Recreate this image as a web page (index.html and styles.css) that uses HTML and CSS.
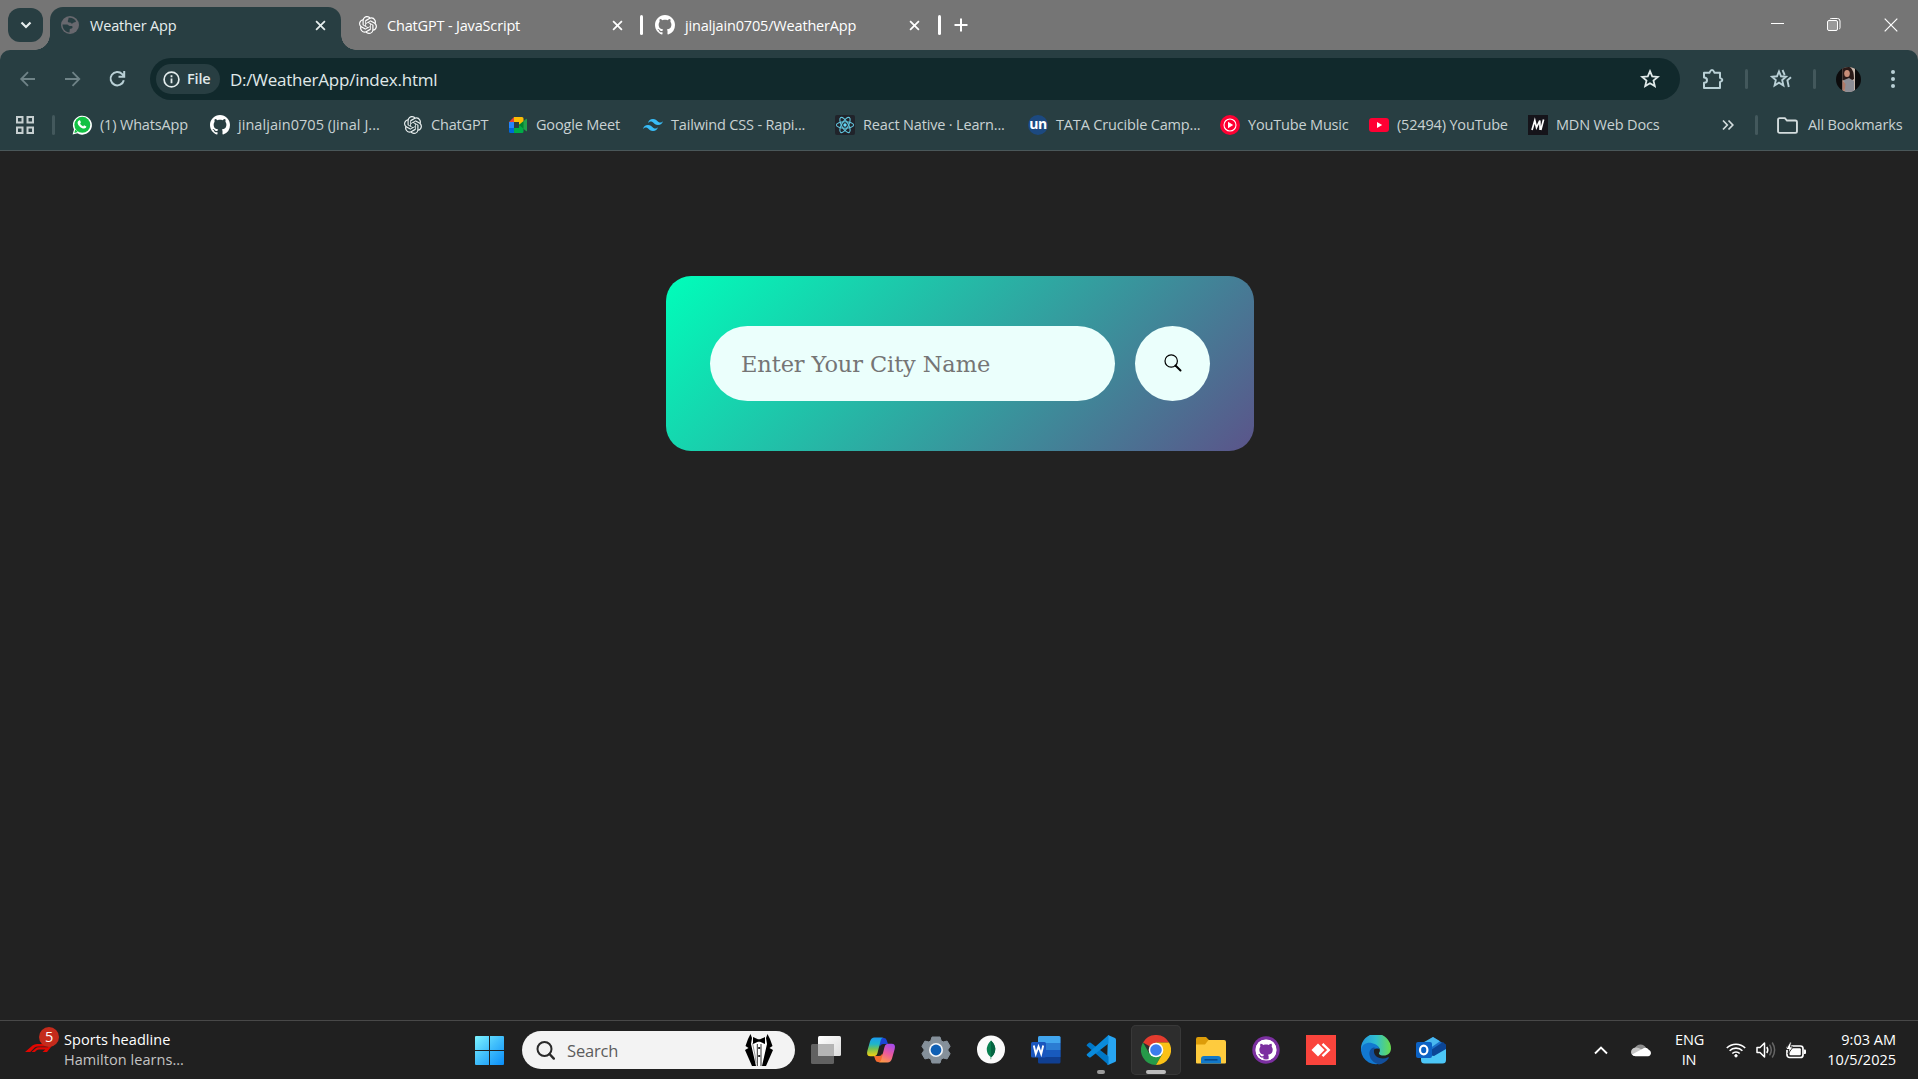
FILE: index.html
```html
<!DOCTYPE html>
<html lang="en">
<head>
<meta charset="utf-8">
<title>Weather App</title>
<link rel="stylesheet" href="styles.css">
</head>
<body>
<svg width="0" height="0" class="defs">
  <defs>
    <symbol id="gh" viewBox="0 0 16 16"><path d="M8 0C3.58 0 0 3.58 0 8c0 3.54 2.29 6.53 5.47 7.59.4.07.55-.17.55-.38 0-.19-.01-.82-.01-1.49-2.01.37-2.53-.49-2.69-.94-.09-.23-.48-.94-.82-1.13-.28-.15-.68-.52-.01-.53.63-.01 1.08.58 1.23.82.72 1.21 1.87.87 2.33.66.07-.52.28-.87.51-1.07-1.78-.2-3.64-.89-3.64-3.95 0-.87.31-1.59.82-2.15-.08-.2-.36-1.02.08-2.12 0 0 .67-.21 2.2.82.64-.18 1.32-.27 2-.27s1.36.09 2 .27c1.53-1.04 2.2-.82 2.2-.82.44 1.1.16 1.92.08 2.12.51.56.82 1.27.82 2.15 0 3.07-1.87 3.75-3.65 3.95.29.25.54.73.54 1.48 0 1.07-.01 1.93-.01 2.2 0 .21.15.46.55.38A8.01 8.01 0 0 0 16 8c0-4.42-3.58-8-8-8z"/></symbol>
    <symbol id="gpt" viewBox="0 0 24 24"><path d="M22.28 9.82a5.98 5.98 0 0 0-.52-4.91 6.05 6.05 0 0 0-6.51-2.9A6.07 6.07 0 0 0 4.98 4.18a5.98 5.98 0 0 0-4 2.9 6.05 6.05 0 0 0 .74 7.1 5.98 5.98 0 0 0 .51 4.91 6.05 6.05 0 0 0 6.52 2.9A5.98 5.98 0 0 0 13.26 24a6.06 6.06 0 0 0 5.77-4.21 5.99 5.99 0 0 0 4-2.9 6.06 6.06 0 0 0-.75-7.07zm-9.02 12.61a4.48 4.48 0 0 1-2.88-1.04l.14-.08 4.78-2.76a.79.79 0 0 0 .39-.68v-6.74l2.02 1.17a.07.07 0 0 1 .04.05v5.58a4.5 4.5 0 0 1-4.49 4.5zM3.6 18.3a4.47 4.47 0 0 1-.54-3.01l.14.08 4.78 2.76a.77.77 0 0 0 .78 0l5.85-3.37v2.33a.08.08 0 0 1-.04.06L9.74 19.95A4.5 4.5 0 0 1 3.6 18.3zM2.34 7.9a4.49 4.49 0 0 1 2.37-1.98V11.6a.77.77 0 0 0 .38.68l5.82 3.35-2.02 1.17a.08.08 0 0 1-.07 0l-4.83-2.79A4.5 4.5 0 0 1 2.34 7.87zm16.6 3.86L13.1 8.36 15.12 7.2a.08.08 0 0 1 .07 0l4.83 2.79a4.49 4.49 0 0 1-.68 8.1v-5.68a.79.79 0 0 0-.4-.65zm2-3.03l-.14-.08-4.77-2.78a.78.78 0 0 0-.79 0L9.41 9.23V6.9a.07.07 0 0 1 .03-.06l4.83-2.79a4.5 4.5 0 0 1 6.68 4.66zM8.3 12.86l-2.02-1.16a.08.08 0 0 1-.04-.06V6.07a4.5 4.5 0 0 1 7.38-3.45l-.14.08-4.78 2.76a.79.79 0 0 0-.39.68zm1.1-2.36L12 9l2.6 1.5v3L12 15l-2.6-1.5z"/></symbol>
    <symbol id="x" viewBox="0 0 12 12"><path d="M1.2 1.2l9.6 9.6M10.8 1.2l-9.6 9.6" fill="none" stroke="currentColor" stroke-width="1.9"/></symbol>
    <symbol id="star" viewBox="0 0 20 20"><path d="M10 2.2l2.200 5.200 5.600.5-4.300 3.700 1.300 5.500L10 14.200l-4.800 2.900 1.300-5.500-4.300-3.700 5.600-.5z" fill="none" stroke="currentColor" stroke-width="1.800"/></symbol>
  </defs>
</svg>

<header class="browser">
  <div class="tabstrip">
    <button class="tabsearch"><svg width="12" height="8" viewBox="0 0 12 8"><path d="M1.5 1.5L6 6l4.5-4.5" fill="none" stroke="#e6eeee" stroke-width="2.2"/></svg></button>
    <div class="tab active">
      <svg class="fav" viewBox="0 0 20 20"><circle cx="10" cy="10" r="9" fill="#68686e"/><path d="M2.500 9.500H7c1.500 0 1.500 1.500 2.800 1.500h2c1.200.3 1 2-.2 2.400-1 .3-1.800 0-1.900 1.300l-.2 2.700c-4-.2-7-3.500-7-7.900zM8.500 2.800c3.500-.6 6 1 7.500 3.400-.3 1.500-2 .8-3 1.800-.8 1-2.300.6-2.400-.5-1.500.1-3-.2-2.800-1.500.1-1.200 1-1.600.7-3.200z" fill="#283e42"/></svg>
      <span class="title">Weather App</span>
      <svg class="close" viewBox="0 0 12 12"><use href="#x"/></svg>
    </div>
    <div class="tab second">
      <svg class="fav" fill="#fff"><use href="#gpt"/></svg>
      <span class="title">ChatGPT - JavaScript</span>
      <svg class="close"><use href="#x"/></svg>
    </div>
    <i class="tabsep"></i>
    <div class="tab third">
      <svg class="fav" fill="#fff"><use href="#gh"/></svg>
      <span class="title">jinaljain0705/WeatherApp</span>
      <svg class="close"><use href="#x"/></svg>
    </div>
    <i class="tabsep"></i>
    <svg class="plus" viewBox="0 0 14 14"><path d="M7 .5v13M.5 7h13" stroke="#fff" stroke-width="2"/></svg>
    <div class="winctl">
      <svg width="14" height="14" viewBox="0 0 14 14"><path d="M1 5.500h13" stroke="#fff"/></svg>
      <svg width="14" height="14" viewBox="0 0 14 14" fill="none" stroke="#fff"><rect x=".5" y="2.500" width="10" height="10" rx="1.500" fill="#999"/><path d="M3 1.200Q3.200.5 4.200.5H10.500Q13 .5 13 3v6.800q0 1-.8 1.200"/></svg>
      <svg width="14" height="14" viewBox="0 0 14 14"><path d="M.7.700l12.600 12.600M13.300.700L.7 13.300" stroke="#fff" stroke-width="1.200"/></svg>
    </div>
  </div>

  <div class="toolbar">
    <div class="nav">
      <svg viewBox="0 0 20 20" class="dim"><path d="M17 10H3.500M10 3.200L3.200 10l6.800 6.800" fill="none" stroke="currentColor" stroke-width="1.800"/></svg>
      <svg viewBox="0 0 20 20" class="dim"><path d="M2 10h14M9.500 3.200l6.800 6.800-6.800 6.800" fill="none" stroke="currentColor" stroke-width="1.800"/></svg>
      <svg viewBox="0 0 20 20"><path d="M15.800 11.200A6.700 6.700 0 1 1 14.200 5.100L16 7.200M16.200 2v5.700h-5.700" fill="none" stroke="currentColor" stroke-width="2"/></svg>
    </div>
    <div class="omnibox">
      <span class="chip"><svg width="17" height="17" viewBox="0 0 17 17"><circle cx="8.500" cy="8.500" r="7.400" fill="none" stroke="#e3ecec" stroke-width="1.700"/><path d="M8.500 7.600v4.600M8.500 4.300v1.900" stroke="#e3ecec" stroke-width="1.800"/></svg><b>File</b></span>
      <span class="url">D:/WeatherApp/index.html</span>
      <svg class="star"><use href="#star"/></svg>
    </div>
    <div class="actions">
      <svg width="22" height="22" viewBox="0 0 22 22"><path d="M2 4.800h5.500c.5-.3.500-2.800 2.500-2.800s2 2.500 2.500 2.800H18V10c.4.500 2.300.5 2.300 2s-1.900 1.500-2.300 2v6H2v-5.200c2 0 3-1 3-2.600S4 9.600 2 9.600z" fill="none" stroke="currentColor" stroke-width="2" stroke-linejoin="round"/></svg>
      <i class="sep"></i>
      <svg width="22" height="22" viewBox="0 0 22 22"><path d="M9 3.500l2 4.800 5 .4-3.800 3.400 1.200 5.400L9 14.700l-4.400 2.800 1.200-5.400L2 8.700l5-.4zM12.500 2l2.200 5M21 9.200l-3.600 3.200 1.400 6.600" fill="none" stroke="currentColor" stroke-width="1.900"/></svg>
      <i class="sep"></i>
      <svg width="25" height="25" viewBox="0 0 25 25"><defs><clipPath id="av"><circle cx="12.500" cy="12.500" r="12.500"/></clipPath></defs><g clip-path="url(#av)"><path fill="#0c0b0c" d="M0 0h25v25H0z"/><path fill="#c9b8ad" d="M6.500 0H19v25H6.500z"/><path fill="#2b1a18" d="M6.500 0H14q4 3 4 12l-5 3-6.500-2z"/><ellipse cx="11" cy="6.500" rx="2.800" ry="3.600" fill="#c98d78"/><path d="M8 13l5-2 5 3v11H9z" fill="#8d8d95"/><path d="M6.500 13l3 4-1 8h-2z" fill="#b07a68"/></g></svg>
      <svg width="4" height="18" viewBox="0 0 4 18" fill="currentColor"><circle cx="2" cy="2" r="2"/><circle cx="2" cy="9" r="2"/><circle cx="2" cy="16" r="2"/></svg>
    </div>
  </div>

  <nav class="bookmarks">
    <svg class="apps" viewBox="0 0 20 20" fill="none" stroke="#c6cfd0" stroke-width="2"><path d="M2 2h5.500v5.500H2zM12.500 2H18v5.500h-5.500zM2 12.500h5.500V18H2zM12.500 12.500H18V18h-5.500z"/></svg>
    <i class="sep"></i>
    <div class="list">
      <a><svg viewBox="0 0 20 20"><path d="M.6 19.600l1.400-5A9.500 9.500 0 1 1 5.500 18.300z" fill="#fff"/><circle cx="10.300" cy="9.800" r="8" fill="#12c143"/><path d="M2.300 17.900l1-3.500 2.500 2.600z" fill="#12c143"/><path d="M7.300 5.300c.8-.2 1 .3 1.500 1.700.2.600-.2 1-.7 1.600.7 1.300 1.700 2.200 3.100 2.800.6-.7.800-1.200 1.300-1 1.300.6 1.900.9 1.900 1.200 0 1.300-1.400 2.100-2.500 2-2.700-.3-5.900-3.200-6.300-5.700 0-1.100.7-2.300 1.700-2.600z" fill="#fff"/></svg><span>(1) WhatsApp</span></a>
      <a><svg fill="#fff"><use href="#gh"/></svg><span class="wide">jinaljain0705 (Jinal J...</span></a>
      <a><svg fill="#e9efef" class="s18"><use href="#gpt"/></svg><span>ChatGPT</span></a>
      <a><svg viewBox="0 0 20 20"><path d="M1 7l5-5v5z" fill="#ea4335"/><path d="M6 2h8q1.500 0 1.500 1.500V8L11 10V7H6z" fill="#fbbc04"/><path d="M1 7h5v6H1z" fill="#2684fc"/><path d="M1 13h5v5H2.500Q1 18 1 16.500z" fill="#0066da"/><path d="M6 13h5v-3l4.500 2v4.500q0 1.500-1.500 1.500H6z" fill="#00ac47"/><path d="M11 10l7-6q1-.6 1 .5v11q0 1-1 .4z" fill="#21a04a"/><path d="M11 10l4.500-3.800v7.600z" fill="#00832d"/></svg><span>Google Meet</span></a>
      <a><svg viewBox="0 0 24 24"><path d="M12 4.800c-3.200 0-5.200 1.600-6 4.800 1.200-1.600 2.600-2.200 4.200-1.800.91.230 1.570.890 2.290 1.620C13.670 10.610 15.030 12 18 12c3.200 0 5.200-1.600 6-4.800-1.200 1.600-2.600 2.200-4.200 1.800-.91-.230-1.570-.890-2.290-1.620C16.330 6.190 14.970 4.800 12 4.800zM6 12c-3.200 0-5.200 1.600-6 4.800 1.200-1.600 2.600-2.200 4.200-1.800.91.230 1.570.890 2.290 1.620C7.670 17.810 9.030 19.200 12 19.200c3.200 0 5.200-1.600 6-4.800-1.200 1.600-2.600 2.200-4.200 1.800-.91-.230-1.570-.890-2.290-1.620C10.330 13.390 8.970 12 6 12z" fill="#38bdf8"/></svg><span>Tailwind CSS - Rapi...</span></a>
      <a><svg viewBox="0 0 20 20"><rect width="20" height="20" rx="2" fill="#20232a"/><g fill="none" stroke="#61c5dd" stroke-width="1.100"><ellipse cx="10" cy="10" rx="8.600" ry="3.300"/><ellipse cx="10" cy="10" rx="8.600" ry="3.300" transform="rotate(60 10 10)"/><ellipse cx="10" cy="10" rx="8.600" ry="3.300" transform="rotate(120 10 10)"/></g><circle cx="10" cy="10" r="1.700" fill="#61dafb"/></svg><span>React Native · Learn...</span></a>
      <a><i class="un">un</i><span>TATA Crucible Camp...</span></a>
      <a><svg viewBox="0 0 20 20"><circle cx="10" cy="10" r="10" fill="#f03"/><circle cx="10" cy="10" r="6" fill="none" stroke="#fff" stroke-width="1.100"/><path d="M8 6.800l5.200 3.200L8 13.200z" fill="#fff"/></svg><span>YouTube Music</span></a>
      <a><svg viewBox="0 0 20 20"><rect y="3" width="20" height="14" rx="3" fill="#f03"/><path d="M8 7l5.200 3L8 13z" fill="#fff"/></svg><span>(52494) YouTube</span></a>
      <a><svg viewBox="0 0 20 20"><path fill="#15141a" d="M0 0h20v20H0z"/><path d="M4 15L6.800 5.500l1.700 7L11.800 5.500l.3 9.500M12.800 15L15.600 4.500" fill="none" stroke="#fff" stroke-width="1.700"/></svg><span>MDN Web Docs</span></a>
    </div>
    <svg class="more" viewBox="0 0 12 12"><path d="M1 1.500L5.300 6 1 10.500M6.500 1.500L10.800 6l-4.300 4.500" fill="none" stroke="#d3dcdd" stroke-width="1.700"/></svg>
    <i class="sep"></i>
    <a class="all"><svg viewBox="0 0 20 16"><path d="M1 2.500Q1 1 2.500 1H7.500l2 2.300H17.500Q19 3.300 19 4.800v8.700Q19 15 17.500 15h-15Q1 15 1 13.500z" fill="none" stroke="#d3dcdd" stroke-width="1.800"/></svg><span>All Bookmarks</span></a>
  </nav>
</header>

<main class="page">
  <div class="card">
    <input type="text" placeholder="Enter Your City Name">
    <button aria-label="Search"><svg width="18" height="18" viewBox="0 0 18 18"><circle cx="7.200" cy="7" r="6.200" fill="none" stroke="#000" stroke-width="1.200"/><path d="M11.500 11.500l5 5" stroke="#000" stroke-width="2" stroke-linecap="round"/></svg></button>
  </div>
</main>

<footer class="taskbar">
  <div class="widget">
    <div class="f1"><svg width="28" height="10" viewBox="0 0 28 10"><path d="M0 9L7.500 2.500Q9.500 1 12 1H28l-2.600 2.400H13q-2 0-3.300 1.200L5.200 9zM6.500 9l4-3.500Q11.800 4.300 13.500 4.300H24L21.600 6.400H14q-1.200 0-2 .7L9.800 9zM17.500 9L26 1.500h2L22 9z" fill="#e10600"/></svg><b class="badge">5</b></div>
    <div class="news"><p>Sports headline</p><p class="sub">Hamilton learns...</p></div>
  </div>
  <svg class="start" viewBox="0 0 29 29"><defs><linearGradient id="w" x1="0" y1="0" x2="1" y2="1" ><stop offset="0" stop-color="#7df3ff"/><stop offset=".5" stop-color="#3fbdfb"/><stop offset="1" stop-color="#0a8df8"/></linearGradient></defs><path d="M1 0h13v14H0V1Q0 0 1 0zM15 0h13q1 0 1 1v13H15zM0 15h14v14H1q-1 0-1-1zM15 15h14v13q0 1-1 1H15z" fill="url(#w)"/></svg>
  <div class="search">
    <svg width="19" height="19" viewBox="0 0 19 19"><circle cx="8.500" cy="8" r="7" fill="none" stroke="#2a2a2a" stroke-width="2"/><path d="M13.500 13l4.300 4.600" stroke="#2a2a2a" stroke-width="2.400" stroke-linecap="round"/></svg>
    <span>Search</span>
    <svg class="tux" width="28" height="33" viewBox="0 0 28 33"><path d="M7 3L14 9l7-6 2 10-4 19h-9L6 12z" fill="#fff"/><path d="M5.500 0L7 4 6 10l5 22H7L3.500 24 0 16l3.500-2L.5 12 3 5zM22.500 0L21 4l1 6-5 22h4l3.500-8L28 16l-3.500-2 3-2L25 5z" fill="#000"/><path d="M8 3l5 2.300h2L20 3v7l-5-2.200h-2L8 10z" fill="#000"/><path d="M12.300 10v22M16 10v22" stroke="#333" stroke-width="1"/><path d="M14.200 13v2M14.200 21v2" stroke="#222" stroke-width="2"/><path d="M7.500 9l2.500 12 1 8" stroke="#999" stroke-width="1" fill="none"/></svg>
  </div>
  <div class="apps-row">
    <div class="slot"><svg viewBox="0 0 30 30"><defs><linearGradient id="tv" x1="0" y1="0" x2="1" y2="1"><stop offset="0" stop-color="#fff"/><stop offset="1" stop-color="#dcdcdc"/></linearGradient></defs><rect x="7" y="1" width="23" height="20" rx="1.500" fill="url(#tv)"/><rect x="0" y="9" width="23" height="20" rx="1.500" fill="#777" opacity=".75"/><path d="M7 9h16v12H7z" fill="#b4b4b4"/></svg></div>
    <div class="slot"><svg viewBox="0 0 30 30"><defs><linearGradient id="c1" x1="0" y1="0" x2="0" y2="1"><stop offset="0" stop-color="#1b9cf0"/><stop offset=".35" stop-color="#1fb5c9"/><stop offset=".6" stop-color="#72c055"/><stop offset="1" stop-color="#f8d010"/></linearGradient><linearGradient id="c2" x1=".7" y1="0" x2=".3" y2="1"><stop offset="0" stop-color="#a64bea"/><stop offset=".5" stop-color="#ec5a9c"/><stop offset="1" stop-color="#ff9a45"/></linearGradient></defs><path d="M11 3h7q2 0 2.700 2.200L22 9h-5q-2.500 0-3.200 2.500L10 3z" fill="#1a45d4"/><path d="M19 27h-7q-2 0-2.700-2.200L8 21h5q2.500 0 3.200-2.500L20 27z" fill="#f36a30"/><path d="M8.500 2.500H18q-2.500 0-3.400 3.200L11.500 18q-.9 3.300-4 3.300H4.500Q0 21.300 1.300 16L4 6.500Q5.200 2.500 8.500 2.500z" fill="url(#c1)"/><path d="M21.500 27.500H12q2.500 0 3.400-3.200L18.500 12q.9-3.300 4-3.300h3q4.500 0 3.200 5.300L26 23.500q-1.200 4-4.500 4z" fill="url(#c2)"/></svg></div>
    <div class="slot"><svg viewBox="0 0 30 30"><path d="M11 2h8l1.200 3.800 2 1.100 3.900-.8 3 5.200L26.700 15l2.400 3.700-3 5.200-3.900-.8-2 1.100L19 28h-8l-1.200-3.800-2-1.100-3.900.8-3-5.200L3.300 15 .9 11.300l3-5.200 3.900.8 2-1.100z" fill="#85909a" stroke="#85909a" stroke-width="1" stroke-linejoin="round"/><circle cx="15" cy="15" r="7" fill="#f4f6f8"/><circle cx="15" cy="15" r="5.400" fill="#0f5fb4"/></svg></div>
    <div class="slot"><svg viewBox="0 0 30 30"><circle cx="15" cy="14.500" r="14" fill="#fafafa"/><path d="M15 5.500q4.700 4.500 4.200 9.500-.4 4.500-4 7.200v2h-.6V22q-3.500-2.700-3.800-7-.3-5 4.200-9.500z" fill="#087f4f"/><path d="M15 5.500q4.700 4.500 4.200 9.500-.4 4.500-4 7.200z" fill="#046341"/></svg></div>
    <div class="slot"><svg viewBox="0 0 30 30"><rect x="7" y="1" width="22.500" height="27.500" rx="1.500" fill="#103f91"/><path d="M8.500 1H28q1.500 0 1.500 1.500V8H7V2.500Q7 1 8.500 1z" fill="#41a5ee"/><path d="M7 8h22.500v7H7z" fill="#2b7cd3"/><path d="M7 15h22.500v7H7z" fill="#185abd"/><rect y="7" width="15" height="15.500" rx="1.500" fill="#1a56be"/><path d="M2.800 10.500l2 8.500L7.500 11.500 10.200 19l2-8.500" fill="none" stroke="#fff" stroke-width="1.900"/></svg></div>
    <div class="slot on"><svg viewBox="0 0 30 30"><path d="M22 0l7 3q1 .5 1 1.500v21q0 1-1 1.500l-7 3-1-1z" fill="#27a5f2"/><path d="M1 9.500l2-1.800q.8-.6 1.700 0L22.500 21.500V30L.8 10.800Q.4 10.200 1 9.500z" fill="#0078c8"/><path d="M1 20.500l2 1.800q.8.600 1.700 0L22.500 8.500V0L.8 19.200q-.4.600.2 1.300z" fill="#0a8bdc"/></svg></div>
    <div class="slot cur"><svg viewBox="0 0 30 30"><path d="M15 15L2 7.500A15 15 0 0 1 28 7.500L15 7.500z" fill="#e33b2e"/><path d="M2 7.500A15 15 0 0 0 15 30l6.500-11.200L15 15 8.500 18.800z" fill="#269a49"/><path d="M28 7.500A15 15 0 0 1 15 30L21.500 18.800 15 15V7.500z" fill="#fbc116"/><circle cx="15" cy="15" r="7.300" fill="#fff"/><circle cx="15" cy="15" r="5.800" fill="#3b7ded"/></svg></div>
    <div class="slot"><svg viewBox="0 0 30 30"><path d="M0 4q0-2 2-2h8l3.500 3.500H22V12H0z" fill="#dc9c09"/><path d="M0 9.500h9L12.500 5H28q2 0 2 2v20.500q0 1-1 1H1q-1 0-1-1z" fill="#fecb3e"/><path d="M5 28.500V24q0-3 3-3h14q3 0 3 3v4.500z" fill="#1279c9"/><path d="M8.500 24.800h13" stroke="#07488a" stroke-width="1.500"/></svg></div>
    <div class="slot"><svg viewBox="0 0 30 30"><circle cx="15" cy="15" r="13.700" fill="#7b2fa0"/><circle cx="15" cy="15" r="10.500" fill="#fff"/><circle cx="15" cy="15" r="9.600" fill="#7b2fa0"/><use href="#gh" x="4.500" y="4.500" width="21" height="21" fill="#fff"/></svg></div>
    <div class="slot"><svg viewBox="0 0 30 30"><path fill="#fa443c" d="M0 0h30v30H0z"/><path d="M5.500 15L12 8.500l6.500 6.500-6.500 6.500z" fill="#fff"/><path d="M16.500 8.800l6.300 6.200-6.300 6.200" fill="none" stroke="#fff" stroke-width="2.400"/></svg></div>
    <div class="slot"><svg viewBox="0 0 30 30"><defs><linearGradient id="e1"><stop offset="0" stop-color="#2297e0"/><stop offset=".5" stop-color="#31bfcf"/><stop offset="1" stop-color="#68dc4d"/></linearGradient></defs><path d="M0 14A15 15 0 0 1 30 13.500c0 4.500-3.500 7-7 7-3.500 0-5.500-1.200-5-2.500 2-2.500.8-7-4-7.500-5 0-10 2.500-14 6z" fill="url(#e1)"/><path d="M0 15.500C.8 9 6 7.200 10.500 8c4.500.8 7.500 3.500 8 6-4.500-1.500-7.500 1-7.500 4 0 5 5 9 11 9.500A15 15 0 0 1 0 15.500z" fill="#1278d0"/><path d="M12.500 12.500c-3 1-4.500 4-4 7.500.8 5 4.500 8 9.500 9.500 4-.8 7.500-3 9.800-6.500.4-.7-.2-1-.8-.7-5 2.500-13 1.200-14-5-.2-2 .2-3.500 1.500-4.500z" fill="#124f9c"/></svg></div>
    <div class="slot"><svg viewBox="0 0 30 30"><path d="M5 10L17 2l13 8v8L15 24 5 18z" fill="#1b6fc8"/><path d="M9 6.500L17 2l7 4.200L10 16H5v-6z" fill="#48b8f0"/><path d="M12 17L27 7l3 3v5L15 24z" fill="#0b4596"/><path d="M5 19l13 2 12-7v11q0 3.500-3.500 3.500H8.500Q5 28.500 5 25z" fill="#4cc6f6"/><rect y="7" width="16" height="16" rx="2" fill="#0c62c4"/><ellipse cx="7.700" cy="15" rx="3.700" ry="4.300" fill="none" stroke="#fff" stroke-width="2.200"/></svg></div>
  </div>
  <div class="tray">
    <svg class="chev" width="14" height="9" viewBox="0 0 14 9"><path d="M1 7.500l6-6 6 6" fill="none" stroke="#fff" stroke-width="1.900"/></svg>
    <svg class="cloud" width="20" height="14" viewBox="0 0 20 14"><path d="M4 5a6 6 0 0 1 11 0l-4 5-9-1z" fill="#8c8c8c"/><path d="M4.500 4.500q3-.5 7 2.500L7 13H4Q0 12.500 0 9q.3-4 4.500-4.500z" fill="#c6c6c6"/><path d="M13 5q3-1 4.500 1.500Q20 7.500 20 10q-.3 3-3 3.200H4.500Q2 13 1 11.500z" fill="#fff"/></svg>
    <div class="lang"><p>ENG</p><p>IN</p></div>
    <svg class="wifi" width="20" height="16" viewBox="0 0 20 16" fill="none" stroke="#fff" stroke-width="1.600"><path d="M.8 6a13 13 0 0 1 18.400 0M3.600 8.800a9 9 0 0 1 12.800 0M6.300 11.500a5.200 5.200 0 0 1 7.400 0"/><circle cx="10" cy="13.800" r="1.200" fill="#fff" stroke-width="1"/></svg>
    <svg class="vol" width="20" height="18" viewBox="0 0 20 18" fill="none" stroke="#fff" stroke-width="1.500"><path d="M1 6.500h3L8.500 2v14L4 11.500H1z" stroke-linejoin="round"/><path d="M10.800 6q2 3 0 6"/><path d="M13.500 3.700q3.600 5.300 0 10.600M16.200 1.500q4.800 7.500 0 15" stroke="#666"/></svg>
    <svg class="bat" width="20" height="17" viewBox="0 0 20 17"><rect x="1" y="4" width="16" height="11.500" rx="2.500" fill="none" stroke="#fff" stroke-width="1.700"/><rect x="3.500" y="6.300" width="11.300" height="7" rx="1" fill="#fff"/><path d="M18 7.500h1q1 0 1 1v2.500q0 1-1 1h-1z" fill="#fff"/><path d="M4 0L0 7.500h3L2 12l5-7H4.500L5.500 0z" fill="#fff" stroke="#202020" stroke-width=".9"/></svg>
    <div class="clock"><p>9:03 AM</p><p>10/5/2025</p></div>
  </div>
</footer>
</body>
</html>
```
FILE: styles.css
```css
* { box-sizing: border-box; }
body {
  margin: 0;
  height: 1079px;
  display: flex;
  flex-direction: column;
  overflow: hidden;
  background: #222;
  font-family: "Open Sans", "Noto Sans", sans-serif;
  font-size: 14.5px;
  letter-spacing: -0.17px;
}
.defs { position: absolute; }
p { margin: 0; }
button, input { border: 0; padding: 0; font-family: inherit; }
svg { flex: none; }
span { white-space: nowrap; }

/* Tab strip */
.browser { flex: none; height: 151px; background: #757575; }
.tabstrip {
  height: 50px;
  display: flex;
  align-items: center;
  color: #fff;
  padding-left: 8px;
}
.tabsearch {
  width: 35px;
  height: 34px;
  border-radius: 12px;
  background: #283e42;
  display: flex;
  align-items: center;
  justify-content: center;
  margin-right: 7px;
}
.tab { display: flex; align-items: center; height: 36px; }
.tab .title { flex: 1; margin-left: 10px; }
.tab.active {
  position: relative;
  width: 291px;
  height: 43px;
  align-self: flex-end;
  padding: 0 15px 7px 10px;
  border-radius: 13px 13px 0 0;
  background: #283e42;
  color: #e6eeee;
}
.tab.active::before, .tab.active::after {
  content: "";
  position: absolute;
  bottom: 0;
  width: 15px;
  height: 15px;
}
.tab.active::before { left: -15px; background: radial-gradient(circle at 0 0, transparent 14.5px, #283e42 15px); }
.tab.active::after { right: -15px; background: radial-gradient(circle at 100% 0, transparent 14.5px, #283e42 15px); }
.fav { width: 20px; height: 20px; }
.close { width: 11px; height: 11px; }
.second { width: 282px; padding-left: 18px; }
.second .fav { width: 18px; height: 18px; }
.third { width: 277px; padding-left: 12px; }
.second { margin-right: 17px; }
.third { margin-right: 18px; }
.tabsep { width: 3px; height: 20px; border-radius: 2px; background: #fff; }
.plus { width: 14px; height: 14px; margin-left: 13px; }
.winctl { margin-left: auto; padding-right: 20px; display: flex; gap: 43px; }

/* Address bar */
.toolbar {
  height: 56px;
  padding-top: 2px;
  display: flex;
  align-items: center;
  background: #283e42;
  border-radius: 10px 10px 0 0;
  color: #b9d0d6;
}
.nav { display: flex; gap: 25px; width: 150px; padding-left: 18px; }
.nav svg { width: 20px; height: 20px; }
.nav .dim { color: #6f8387; }
.omnibox {
  width: 1530px;
  height: 42px;
  padding: 0 20px 0 6px;
  border-radius: 21px;
  background: #11292c;
  display: flex;
  align-items: center;
  color: #e0eaea;
}
.chip {
  width: 64px;
  height: 30px;
  border-radius: 15px;
  background: #283e42;
  display: flex;
  align-items: center;
  gap: 7px;
  padding-left: 7px;
}
.chip b { font-weight: 600; padding-bottom: 1px; }
.url { flex: 1; margin-left: 10px; font-size: 17px; letter-spacing: -0.24px; }
.star { width: 20px; height: 20px; }
.actions { display: flex; align-items: center; margin-left: 22px; }
.actions .sep { margin: 0 22px 0 21px; }
.actions .sep + svg + .sep { margin: 0 20px 0 21px; }
.actions svg:last-child { margin-left: 30px; }
.sep { width: 3px; height: 20px; border-radius: 2px; background: #43585c; flex: none; }

/* Bookmarks bar */
.bookmarks {
  height: 45px;
  padding: 0 0 6px 15px;
  display: flex;
  align-items: center;
  background: #283e42;
  border-bottom: 1px solid #4a5759;
  color: #c9d2d3;
}
.apps { width: 20px; height: 20px; margin-right: 17px; }
.list {
  margin-left: 17px;
  width: 1650px;
  display: grid;
  grid-template-columns: 138px 194px 104px 135px 192px 193px 192px 149px 159px 1fr;
}
.bookmarks a { display: flex; align-items: center; gap: 8px; }
.bookmarks a span { padding-bottom: 2px; }
.bookmarks a .wide { letter-spacing: 0.05px; }
.bookmarks a svg { width: 20px; height: 20px; }
.bookmarks a .s18 { width: 18px; height: 18px; margin-right: 1px; }
.un {
  width: 20px;
  height: 20px;
  border-radius: 50%;
  background: #1c4980;
  color: #fff;
  font: 700 14px/17px "Open Sans", sans-serif;
  letter-spacing: -0.5px;
  text-align: center;
}
.more { width: 12px; height: 12px; margin-right: 21px; }
.bookmarks .all { margin-left: 19px; gap: 10px; }
.bookmarks .all svg { width: 21px; height: 17px; }

/* Weather page */
.page { flex: 1; padding-top: 125px; }
.card {
  width: 588px;
  height: 175px;
  margin-left: 666px;
  padding: 50px 44px;
  display: flex;
  gap: 20px;
  border-radius: 25px;
  background: linear-gradient(135deg, #00feba, #5b548a);
}
.card input {
  width: 405px;
  height: 75px;
  padding: 1px 31px 0;
  border-radius: 38px;
  background: #ebfffc;
  font: 22.5px "DejaVu Serif", serif;
  letter-spacing: -0.1px;
}
.card input::placeholder { color: #757575; }
.card button {
  width: 75px;
  height: 75px;
  padding-bottom: 1px;
  border-radius: 50%;
  background: #ebfffc;
  display: flex;
  align-items: center;
  justify-content: center;
}

/* Taskbar */
.taskbar {
  flex: none;
  height: 59px;
  display: flex;
  align-items: center;
  background: #202020;
  border-top: 1px solid #484848;
  color: #fff;
}
.widget { width: 475px; display: flex; padding-left: 25px; line-height: 20px; }
.f1 { position: relative; width: 39px; height: 40px; }
.news { letter-spacing: 0.05px; }
.f1 svg { position: absolute; left: 0; top: 13px; }
.badge {
  position: absolute;
  left: 14px;
  top: -3px;
  width: 20px;
  height: 20px;
  border-radius: 50%;
  background: #c42b1c;
  font-weight: 400;
  text-align: center;
}
.sub { color: #c4c4c4; }
.start { width: 29px; height: 29px; margin-right: 18px; }
.search {
  width: 273px;
  height: 38px;
  border-radius: 19px;
  background: #f3f3f3;
  color: #5c5c5c;
  font-size: 16.5px;
  display: flex;
  align-items: center;
  padding: 0 22px 0 14px;
}
.search span { margin-left: 12px; flex: 1; }
.apps-row { display: flex; margin-left: 6px; }
.slot {
  width: 50px;
  height: 50px;
  margin-right: 5px;
  border-radius: 5px;
  display: flex;
  align-items: center;
  justify-content: center;
  position: relative;
}
.slot svg { width: 30px; height: 30px; }
.slot.on::after, .slot.cur::after {
  content: "";
  position: absolute;
  bottom: 1px;
  left: 21px;
  width: 8px;
  height: 4px;
  border-radius: 2px;
  background: #9a9a9a;
}
.slot.cur { background: #2d2d2d; box-shadow: inset 0 0 0 1px #383838; }
.slot.cur::after { left: 15px; width: 20px; background: #bdbdbd; }
.tray { margin-left: auto; padding-right: 22px; display: flex; align-items: center; line-height: 20px; }
.chev { margin-right: 23px; }
.cloud { margin-right: 24px; }
.lang { width: 28px; text-align: center; margin-right: 23px; }
.wifi { margin-right: 10px; }
.vol { margin-right: 10px; }
.clock { width: 90px; text-align: right; letter-spacing: 0; }
```
